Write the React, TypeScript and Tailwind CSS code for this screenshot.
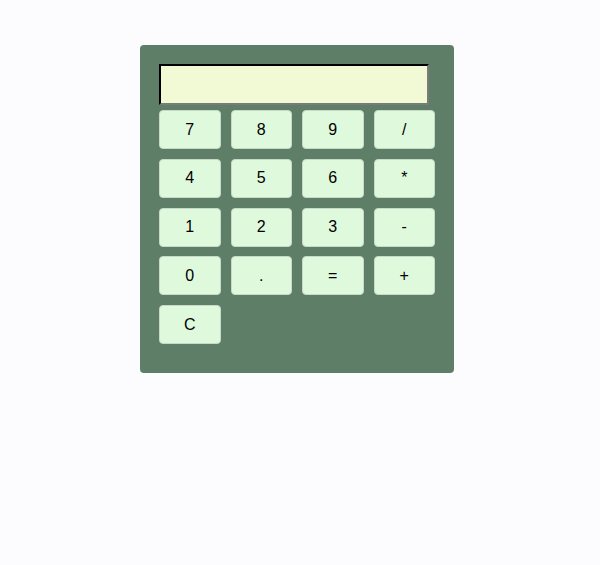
import React, { useState } from 'react';

const keys = ['7', '8', '9', '/', '4', '5', '6', '*', '1', '2', '3', '-', '0', '.', '=', '+', 'C'];

const App: React.FC = () => {
  const [value, setValue] = useState('');

  const press = (k: string) => {
    if (k === 'C') return setValue('');
    if (k === '=') {
      try {
        // eslint-disable-next-line no-eval
        setValue(String(eval(value)));
      } catch {
        setValue('Error');
      }
      return;
    }
    setValue(prev => prev + k);
  };

  return (
    <div className="min-h-[565px] w-full bg-[#fcfbfd] pt-[45px] pl-[140px] font-['Liberation_Sans',Arial,sans-serif]">
      <div className="w-[314px] rounded-[4px] bg-[#5f7e67] pt-[19px] pl-[19px] pr-[19px] pb-[29px]">
        <input
          readOnly
          value={value}
          className="block h-[41px] w-[270px] border-2 border-t-black border-l-black border-r-[#7a7a7a] border-b-[#7a7a7a] bg-[#f1f9d5] px-2 text-right text-xl outline-none"
        />
        <div className="mt-[5px] grid grid-cols-4 gap-x-[10px] gap-y-[9.75px]">
          {keys.map(k => (
            <button
              key={k}
              onClick={() => press(k)}
              className="h-[39px] rounded-[4px] border border-[#c9d9c9] bg-[#dff9dd] text-[16px] text-black"
            >
              {k}
            </button>
          ))}
        </div>
      </div>
    </div>
  );
};

export default App;
